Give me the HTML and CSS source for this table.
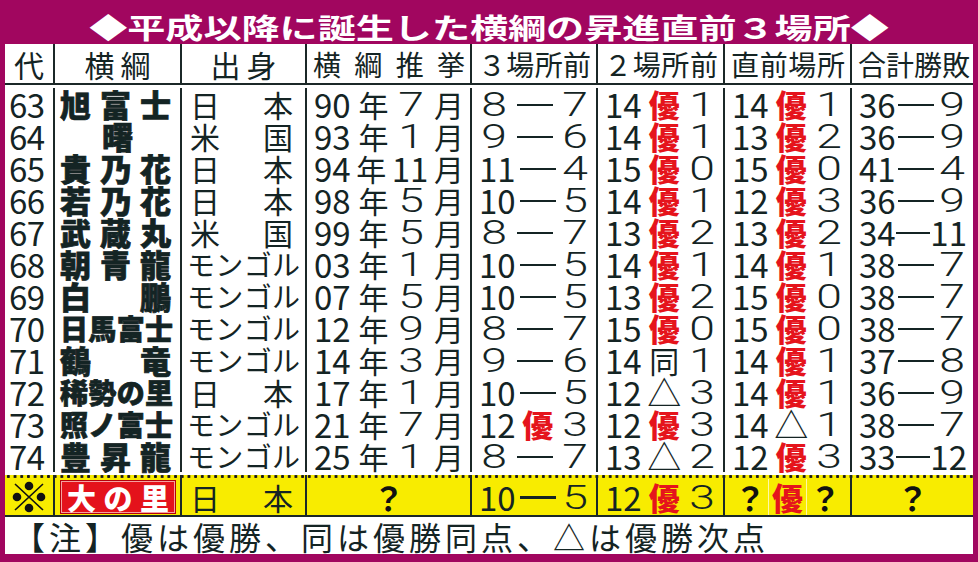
FILE: index.html
```html
<!DOCTYPE html>
<html lang="ja">
<head>
<meta charset="utf-8">
<link rel="stylesheet" href="styles.css">
</head>
<body>
<div class="frame">
  <h1 class="title"><span class="title-text">◆平成以降に誕生した横綱の昇進直前３場所◆</span></h1>
  <div class="panel">
    <div class="row head">
      <div class="c ctr">代</div>
      <div class="c ctr sp">横綱</div>
      <div class="c ctr sp">出身</div>
      <div class="c j"><i>横</i><i>綱</i><i>推</i><i>挙</i></div>
      <div class="c j"><i>３</i><i>場</i><i>所</i><i>前</i></div>
      <div class="c j"><i>２</i><i>場</i><i>所</i><i>前</i></div>
      <div class="c j"><i>直</i><i>前</i><i>場</i><i>所</i></div>
      <div class="c j"><i>合</i><i>計</i><i>勝</i><i>敗</i></div>
    </div>
    <div class="body">
      <div class="row"><div class="c n">63</div><div class="c name j"><i>旭</i><i>富</i><i>士</i></div><div class="c j o"><i class="k">日</i><i class="k">本</i></div><div class="c j"><i>90</i><i class="k">年</i><i class="f">7</i><i class="k">月</i></div><div class="c j"><i class="f">8</i><b class="d"></b><i class="f">7</i></div><div class="c j"><i>14</i><i class="y">優</i><i class="f">1</i></div><div class="c j"><i>14</i><i class="y">優</i><i class="f">1</i></div><div class="c j"><i>36</i><b class="d"></b><i class="f">9</i></div></div>
      <div class="row"><div class="c n">64</div><div class="c name ctr"><i>曙</i></div><div class="c j o"><i class="k">米</i><i class="k">国</i></div><div class="c j"><i>93</i><i class="k">年</i><i class="f">1</i><i class="k">月</i></div><div class="c j"><i class="f">9</i><b class="d"></b><i class="f">6</i></div><div class="c j"><i>14</i><i class="y">優</i><i class="f">1</i></div><div class="c j"><i>13</i><i class="y">優</i><i class="f">2</i></div><div class="c j"><i>36</i><b class="d"></b><i class="f">9</i></div></div>
      <div class="row"><div class="c n">65</div><div class="c name j"><i>貴</i><i>乃</i><i>花</i></div><div class="c j o"><i class="k">日</i><i class="k">本</i></div><div class="c j"><i>94</i><i class="k">年</i><i>11</i><i class="k">月</i></div><div class="c j"><i>11</i><b class="d"></b><i class="f">4</i></div><div class="c j"><i>15</i><i class="y">優</i><i class="f">0</i></div><div class="c j"><i>15</i><i class="y">優</i><i class="f">0</i></div><div class="c j"><i>41</i><b class="d"></b><i class="f">4</i></div></div>
      <div class="row"><div class="c n">66</div><div class="c name j"><i>若</i><i>乃</i><i>花</i></div><div class="c j o"><i class="k">日</i><i class="k">本</i></div><div class="c j"><i>98</i><i class="k">年</i><i class="f">5</i><i class="k">月</i></div><div class="c j"><i>10</i><b class="d"></b><i class="f">5</i></div><div class="c j"><i>14</i><i class="y">優</i><i class="f">1</i></div><div class="c j"><i>12</i><i class="y">優</i><i class="f">3</i></div><div class="c j"><i>36</i><b class="d"></b><i class="f">9</i></div></div>
      <div class="row"><div class="c n">67</div><div class="c name j"><i>武</i><i>蔵</i><i>丸</i></div><div class="c j o"><i class="k">米</i><i class="k">国</i></div><div class="c j"><i>99</i><i class="k">年</i><i class="f">5</i><i class="k">月</i></div><div class="c j"><i class="f">8</i><b class="d"></b><i class="f">7</i></div><div class="c j"><i>13</i><i class="y">優</i><i class="f">2</i></div><div class="c j"><i>13</i><i class="y">優</i><i class="f">2</i></div><div class="c j"><i>34</i><b class="d"></b><i>11</i></div></div>
      <div class="row"><div class="c n">68</div><div class="c name j"><i>朝</i><i>青</i><i>龍</i></div><div class="c j m"><i class="k">モ</i><i class="k">ン</i><i class="k">ゴ</i><i class="k">ル</i></div><div class="c j"><i>03</i><i class="k">年</i><i class="f">1</i><i class="k">月</i></div><div class="c j"><i>10</i><b class="d"></b><i class="f">5</i></div><div class="c j"><i>14</i><i class="y">優</i><i class="f">1</i></div><div class="c j"><i>14</i><i class="y">優</i><i class="f">1</i></div><div class="c j"><i>38</i><b class="d"></b><i class="f">7</i></div></div>
      <div class="row"><div class="c n">69</div><div class="c name j"><i>白</i><i>鵬</i></div><div class="c j m"><i class="k">モ</i><i class="k">ン</i><i class="k">ゴ</i><i class="k">ル</i></div><div class="c j"><i>07</i><i class="k">年</i><i class="f">5</i><i class="k">月</i></div><div class="c j"><i>10</i><b class="d"></b><i class="f">5</i></div><div class="c j"><i>13</i><i class="y">優</i><i class="f">2</i></div><div class="c j"><i>15</i><i class="y">優</i><i class="f">0</i></div><div class="c j"><i>38</i><b class="d"></b><i class="f">7</i></div></div>
      <div class="row"><div class="c n">70</div><div class="c name j four"><i>日</i><i>馬</i><i>富</i><i>士</i></div><div class="c j m"><i class="k">モ</i><i class="k">ン</i><i class="k">ゴ</i><i class="k">ル</i></div><div class="c j"><i>12</i><i class="k">年</i><i class="f">9</i><i class="k">月</i></div><div class="c j"><i class="f">8</i><b class="d"></b><i class="f">7</i></div><div class="c j"><i>15</i><i class="y">優</i><i class="f">0</i></div><div class="c j"><i>15</i><i class="y">優</i><i class="f">0</i></div><div class="c j"><i>38</i><b class="d"></b><i class="f">7</i></div></div>
      <div class="row"><div class="c n">71</div><div class="c name j"><i>鶴</i><i>竜</i></div><div class="c j m"><i class="k">モ</i><i class="k">ン</i><i class="k">ゴ</i><i class="k">ル</i></div><div class="c j"><i>14</i><i class="k">年</i><i class="f">3</i><i class="k">月</i></div><div class="c j"><i class="f">9</i><b class="d"></b><i class="f">6</i></div><div class="c j"><i>14</i><i class="k">同</i><i class="f">1</i></div><div class="c j"><i>14</i><i class="y">優</i><i class="f">1</i></div><div class="c j"><i>37</i><b class="d"></b><i class="f">8</i></div></div>
      <div class="row"><div class="c n">72</div><div class="c name j four"><i>稀</i><i>勢</i><i>の</i><i>里</i></div><div class="c j o"><i class="k">日</i><i class="k">本</i></div><div class="c j"><i>17</i><i class="k">年</i><i class="f">1</i><i class="k">月</i></div><div class="c j"><i>10</i><b class="d"></b><i class="f">5</i></div><div class="c j"><i>12</i><i class="t">△</i><i class="f">3</i></div><div class="c j"><i>14</i><i class="y">優</i><i class="f">1</i></div><div class="c j"><i>36</i><b class="d"></b><i class="f">9</i></div></div>
      <div class="row"><div class="c n">73</div><div class="c name j four"><i>照</i><i>ノ</i><i>富</i><i>士</i></div><div class="c j m"><i class="k">モ</i><i class="k">ン</i><i class="k">ゴ</i><i class="k">ル</i></div><div class="c j"><i>21</i><i class="k">年</i><i class="f">7</i><i class="k">月</i></div><div class="c j"><i>12</i><i class="y">優</i><i class="f">3</i></div><div class="c j"><i>12</i><i class="y">優</i><i class="f">3</i></div><div class="c j"><i>14</i><i class="t">△</i><i class="f">1</i></div><div class="c j"><i>38</i><b class="d"></b><i class="f">7</i></div></div>
      <div class="row"><div class="c n">74</div><div class="c name j"><i>豊</i><i>昇</i><i>龍</i></div><div class="c j m"><i class="k">モ</i><i class="k">ン</i><i class="k">ゴ</i><i class="k">ル</i></div><div class="c j"><i>25</i><i class="k">年</i><i class="f">1</i><i class="k">月</i></div><div class="c j"><i class="f">8</i><b class="d"></b><i class="f">7</i></div><div class="c j"><i>13</i><i class="t">△</i><i class="f">2</i></div><div class="c j"><i>12</i><i class="y">優</i><i class="f">3</i></div><div class="c j"><i>33</i><b class="d"></b><i>12</i></div></div>
    </div>
    <div class="row ozato">
      <div class="c ctr"><svg class="kome" viewBox="0 0 36 32" width="36" height="32"><path d="M4 3 L32 29 M32 3 L4 29" stroke="#111" stroke-width="1.6"/><circle cx="18" cy="5" r="4.3" fill="#111"/><circle cx="18" cy="27" r="4.3" fill="#111"/><circle cx="6" cy="16" r="4.3" fill="#111"/><circle cx="30" cy="16" r="4.3" fill="#111"/></svg></div>
      <div class="c namebox"><div class="redbox"><i>大</i><i>の</i><i>里</i></div></div>
      <div class="c j o"><i class="k">日</i><i class="k">本</i></div>
      <div class="c ctr"><i class="q">？</i></div>
      <div class="c j"><i>10</i><b class="d"></b><i class="f">5</i></div>
      <div class="c j"><i>12</i><i class="y">優</i><i class="f">3</i></div>
      <div class="c split"><i class="q">？</i><i class="y mid">優</i><i class="q">？</i></div>
      <div class="c ctr"><i class="q">？</i></div>
    </div>
    <div class="note">【注】優は優勝、同は優勝同点、△は優勝次点</div>
  </div>
</div>
</body>
</html>
```
FILE: styles.css
```css
html, body {
  margin: 0;
  padding: 0;
}
body {
  width: 978px;
  height: 562px;
  overflow: hidden;
  font-family: "Noto Sans CJK JP", "Noto Sans", sans-serif;
  color: #142424;
}
.frame {
  width: 978px;
  height: 562px;
  box-sizing: border-box;
  background: #a1065f;
  padding: 0 5px 8px 5px;
  display: flex;
  flex-direction: column;
}
.title {
  flex: 0 0 44px;
  margin: 0;
  height: 44px;
  box-sizing: border-box;
  padding-top: 11px;
  line-height: 32px;
  text-align: center;
  color: #fff;
  font-size: 28px;
  font-weight: 700;
  white-space: nowrap;
}
.title-text {
  display: inline-block;
  transform: scaleX(1.36);
}
.panel {
  background: #fff;
  flex: 0 0 510px;
  display: flex;
  flex-direction: column;
}
.row {
  display: grid;
  grid-template-columns: 48px 127px 125px 165px 126px 127px 127px 123px;
  flex-shrink: 0;
}
.c {
  box-sizing: border-box;
  display: flex;
  align-items: center;
  white-space: nowrap;
  font-size: 30px;
  line-height: 32px;
}
.c + .c {
  border-left: 2px solid #1b2828;
}
.c i, .c b {
  font-style: normal;
  font-weight: 400;
  font-size: 33px;
}
.head {
  height: 41px;
  box-sizing: border-box;
  border-bottom: 2px solid #1b2828;
}
.head .c {
  font-size: 30px;
  line-height: 38px;
}
.head .c i {
  font-size: 28px;
}
.head .j {
  padding: 0 5px 0 6px;
}
.ctr {
  justify-content: center;
}
.sp {
  letter-spacing: 6px;
  padding-left: 6px;
}
.j {
  justify-content: space-between;
  padding: 0 6px 0 7px;
}
.body {
  height: 390px;
  box-sizing: border-box;
  padding: 3px 0 3px;
  display: flex;
  flex-direction: column;
  flex-shrink: 0;
}
.body .row {
  height: 32px;
}
.n {
  padding-left: 4px;
  font-size: 33px;
  letter-spacing: -0.5px;
}
.c.name i {
  font-size: 31px;
  font-weight: 900;
  -webkit-text-stroke: 0.7px #142424;
}
.c.name.four i {
  font-size: 28px;
}
.name.j {
  padding: 0 9px 0 5px;
}
.name.four {
  padding: 0 7px 0 5px;
}
.c i.k {
  font-size: 30px;
}
.o {
  padding: 0 12px 0 8px;
}
.m {
  padding: 0 5px 0 5px;
}
.c.m i.k {
  font-size: 28px;
}
.c i.f {
  display: inline-block;
  width: 30px;
  text-align: center;
  font-family: "Roboto", "Liberation Sans", sans-serif;
  font-weight: 300;
  font-size: 34px;
  transform: scaleX(1.36);
}
.d {
  display: inline-block;
  width: 36px;
  height: 2.5px;
  background: #142424;
  margin-top: 2px;
}
.c i.y {
  color: #e5141c;
  font-weight: 900;
  font-size: 31px;
}
.c i.t {
  font-size: 34px;
}
.ozato {
  height: 42px;
  box-sizing: border-box;
  background-color: #f8ec00;
  background-image: radial-gradient(circle, #1a1a1a 1.3px, rgba(0,0,0,0) 1.8px);
  background-size: 6.7px 5px;
  background-repeat: repeat-x;
  background-position: 0 -1px;
  border-bottom: 2px solid #1b2828;
}
.ozato .c {
  padding-top: 3px;
}
.kome {
  display: block;
}
.c.namebox {
  padding: 6px 5px 2px 6px;
  align-items: stretch;
}
.redbox {
  flex: 1;
  display: flex;
  justify-content: space-between;
  align-items: center;
  background: #e4121b;
  border: 1px solid #f6a0a0;
  outline: 1px solid #b5000b;
  padding: 0 5px;
  color: #fff;
  line-height: 30px;
}
.c .redbox i {
  font-size: 29px;
  font-weight: 900;
}
.c i.q {
  font-size: 32px;
  font-weight: 700;
  color: #111;
}
.split {
  justify-content: space-around;
  padding: 0 8px;
}
.c i.mid {
  border-left: 1px solid #fff7a8;
  border-right: 1px solid #fff7a8;
  padding: 0 3px;
  line-height: 36px;
}
.note {
  flex: 1;
  display: flex;
  align-items: center;
  padding-left: 8px;
  font-size: 32px;
  line-height: 36px;
  letter-spacing: 4px;
  white-space: nowrap;
  overflow: hidden;
}
```
